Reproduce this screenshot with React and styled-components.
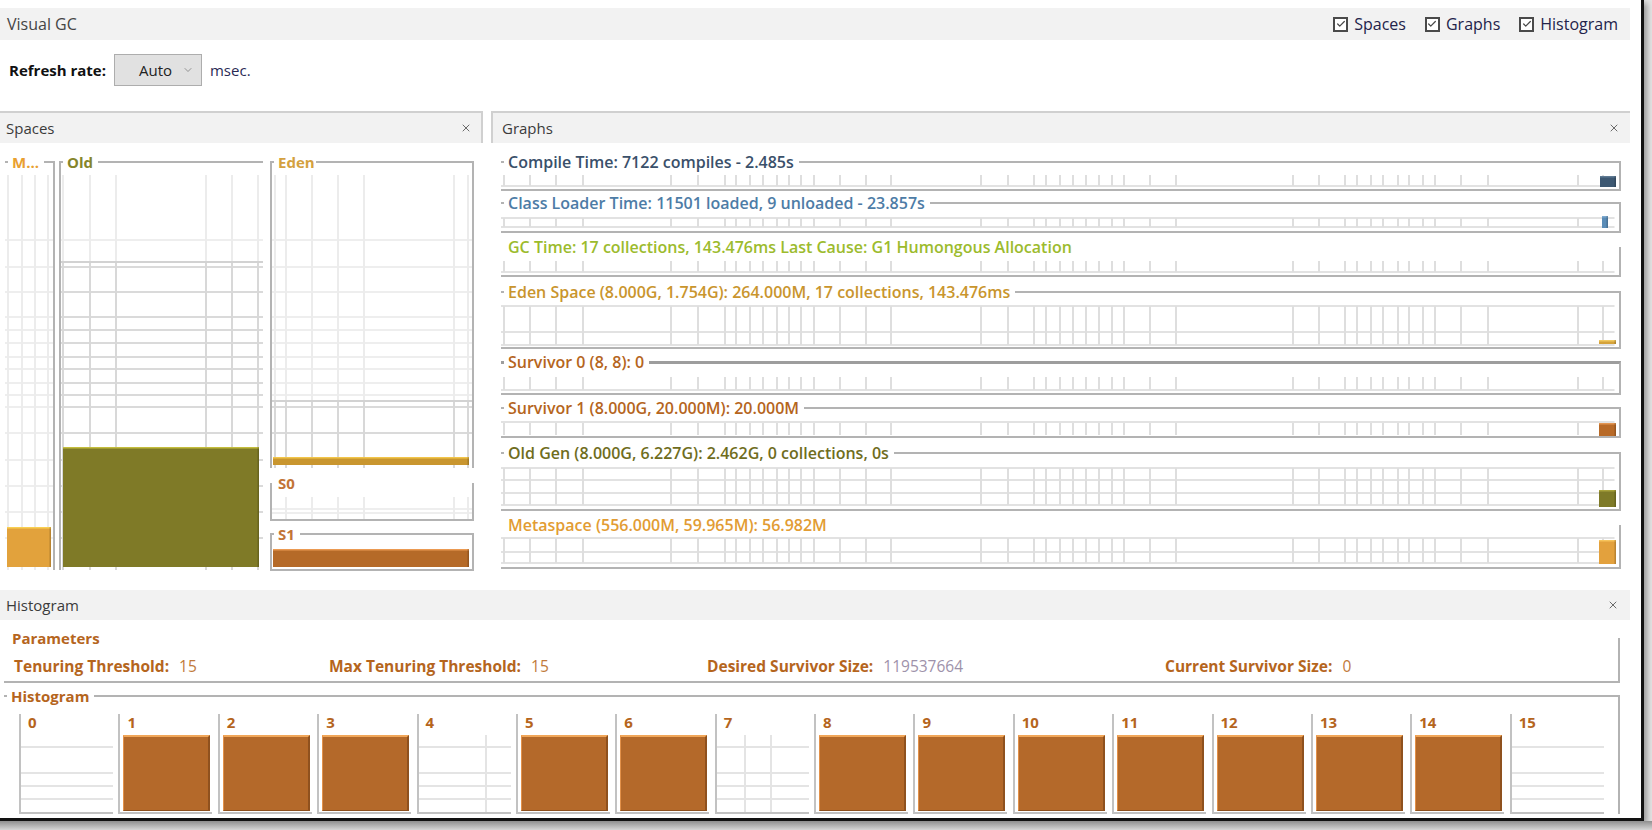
import React from "react";
import styled, { createGlobalStyle } from "styled-components";
import { Check, ChevronDown, X } from "lucide-react";

const GlobalStyle = createGlobalStyle`
  html, body { margin: 0; padding: 0; }
  body {
    width: 1652px;
    height: 830px;
    overflow: hidden;
    background: #e4e4e4;
    font-family: "Open Sans", "Noto Sans", "DejaVu Sans", sans-serif;
  }
`;

const Page = styled.div`
  width: 1652px;
  height: 830px;
  display: flex;
  flex-direction: column;
`;

const Window = styled.div`
  box-sizing: border-box;
  width: 1644px;
  height: 821px;
  padding-top: 8px;
  background: #ffffff;
  border-right: 3px solid #121212;
  border-bottom: 3px solid #121212;
  box-shadow: 3px 3px 6px rgba(0, 0, 0, 0.35);
  overflow: hidden;
`;

const BottomShade = styled.div`
  flex: 1;
  background: linear-gradient(180deg, #8f8f8f, #d6d6d6);
`;

/* ---------- top bar ---------- */

const TitleBar = styled.div`
  box-sizing: border-box;
  width: 1630px;
  height: 32px;
  padding: 0 12px 0 7px;
  display: flex;
  align-items: center;
  justify-content: space-between;
  background: #f2f2f2;
  font-size: 16px;
  color: #454545;
`;

const Toggles = styled.div`
  display: flex;
  align-items: center;
  gap: 19px;
`;

const Toggle = styled.label`
  display: flex;
  align-items: center;
  gap: 6px;
  font-size: 16px;
  color: #23234a;
`;

const CheckBox = styled.span`
  box-sizing: border-box;
  width: 15px;
  height: 15px;
  border: 2px solid #4a4a4a;
  background: #fff;
  display: flex;
  align-items: center;
  justify-content: center;
`;

const RefreshRow = styled.div`
  height: 60px;
  margin-bottom: 11px;
  padding-left: 9px;
  display: flex;
  align-items: center;
  gap: 8px;
  font-size: 15px;
`;

const FieldLabel = styled.span`
  font-weight: 700;
  color: #111;
`;

const Select = styled.div`
  box-sizing: border-box;
  width: 88px;
  height: 32px;
  padding: 0 7px 0 24px;
  display: flex;
  align-items: center;
  justify-content: space-between;
  background: #e1e1e1;
  border: 1px solid #adadad;
  color: #222;
`;

const Unit = styled.span`
  color: #2a2a55;
`;

/* ---------- panels ---------- */

const PanelsRow = styled.div`
  display: flex;
  width: 1630px;
  height: 479px;
`;

const SpacesPanel = styled.section`
  width: 483px;
  flex: none;
`;

const GraphsPanel = styled.section`
  flex: 1;
  margin-left: 8px;
`;

const PanelHeader = styled.div`
  box-sizing: border-box;
  height: ${(p) => p.$h || 32}px;
  padding: 0 ${(p) => p.$padR}px 0 ${(p) => p.$padL}px;
  display: flex;
  align-items: center;
  justify-content: space-between;
  background: #f2f2f2;
  border-top: ${(p) => (p.$framed ? "2px solid #d0d0d0" : "none")};
  border-left: ${(p) => (p.$edge === "left" ? "2px solid #d0d0d0" : "none")};
  border-right: ${(p) => (p.$edge === "right" ? "2px solid #d0d0d0" : "none")};
  font-size: 15px;
  color: #3b3b3b;
`;

const TitledBox = styled.fieldset`
  box-sizing: border-box;
  margin: ${(p) => p.$mt || 0}px 0 0 ${(p) => p.$ml || 0}px;
  padding: 0;
  min-width: 0;
  width: ${(p) => (p.$w ? `${p.$w}px` : "auto")};
  border-style: solid;
  border-color: #b3b3b3;
  border-width: ${(p) => p.$sides};
  border-top: ${(p) => (p.$thick ? "3px solid #9d9d9d" : undefined)};
`;

const BoxTitle = styled.legend`
  margin-left: ${(p) => p.$indent}px;
  padding: 0 ${(p) => (p.$tight ? 1 : 5)}px 0 4px;
  font-size: ${(p) => p.$size || 15}px;
  font-weight: ${(p) => p.$weight || 700};
  line-height: 18px;
  color: ${(p) => p.$color};
  white-space: nowrap;
`;

const ChartSvg = styled.svg`
  display: block;
  width: ${(p) => (p.$w ? `${p.$w}px` : "100%")};
  height: ${(p) => p.$h}px;
`;

const SpacesBody = styled.div`
  display: flex;
  align-items: flex-start;
  padding: 10px 0 0 5px;
`;

const EdenStack = styled.div`
  display: flex;
  flex-direction: column;
  margin-left: 7px;
`;

const GraphsBody = styled.div`
  display: flex;
  flex-direction: column;
  padding: 10px 9px 0 10px;
`;

/* ---------- histogram ---------- */

const HistogramPanel = styled.section`
  width: 1630px;
`;

const ParamGrid = styled.div`
  box-sizing: border-box;
  height: 34px;
  padding: 4px 0 0 10px;
  display: grid;
  grid-template-columns: 315px 378px 458px 1fr;
  align-items: center;
`;

const Param = styled.div`
  display: flex;
  gap: 10px;
  font-size: 15.5px;
  white-space: nowrap;
`;

const ParamName = styled.span`
  font-weight: 700;
  color: #b5651d;
`;

const ParamValue = styled.span`
  color: ${(p) => p.$color};
`;

const Cells = styled.div`
  display: grid;
  grid-template-columns: repeat(16, 1fr);
  width: 1590px;
  margin: 9px 0 0 15px;
`;

const Cell = styled.div`
  border-left: 2px solid #c2c2c2;
  display: flex;
  flex-direction: column;
`;

const CellLabel = styled.div`
  height: 16px;
  line-height: 16px;
  padding-left: 7px;
  font-size: 15px;
  font-weight: 700;
  color: #b5651d;
`;

const BarArea = styled.div`
  position: relative;
  box-sizing: border-box;
  width: 92px;
  height: 79px;
  margin-top: 5px;
  padding: 0 2px 0 3px;
  border-bottom: 2px solid #c2c2c2;
`;

const AgeBar = styled.div`
  box-sizing: border-box;
  height: 76px;
  background: #b4692a;
  border-top: 2px solid #f0a659;
  border-left: 1px solid #e39149;
  border-right: 2px solid #8f511e;
  border-bottom: 1px solid #8f511e;
`;

const CellGrid = styled.svg`
  position: absolute;
  left: 0;
  top: 0;
  width: 92px;
  height: 77px;
`;

/* ---------- data ---------- */

const GRAPH_TICKS = [
  3, 29, 55, 82, 170, 197, 224, 235, 249, 262, 276, 288, 300, 313, 339, 365,
  390, 480, 507, 533, 545, 559, 572, 585, 598, 611, 623, 649, 675, 792, 818,
  844, 856, 870, 882, 897, 908, 922, 934, 960, 987, 1077, 1102,
];

const graphRows = [
  {
    label: "Compile Time: 7122 compiles - 2.485s",
    color: "#3a506a",
    h: 18,
    gap: 0,
    hy: [15],
    v: [4, 15],
    bar: { x: 1099, y: 5, w: 16, h: 11, c: "#3d5872", e: "#5f7a93" },
  },
  {
    label: "Class Loader Time: 11501 loaded, 9 unloaded - 23.857s",
    color: "#4d7ca6",
    h: 19,
    gap: 3,
    hy: [6, 15],
    v: [6, 15],
    bar: { x: 1101, y: 4, w: 6, h: 12, c: "#5a8cb7", e: "#7eaad0" },
  },
  {
    label: "GC Time: 17 collections, 143.476ms Last Cause: G1 Humongous Allocation",
    color: "#9cbb2d",
    h: 19,
    gap: 5,
    noTop: true,
    hy: [16],
    v: [5, 16],
  },
  {
    label: "Eden Space (8.000G, 1.754G): 264.000M, 17 collections, 143.476ms",
    color: "#c9952d",
    h: 46,
    gap: 6,
    hy: [5, 31, 44],
    v: [5, 44],
    bar: { x: 1098, y: 39, w: 17, h: 4, c: "#d5a23a", e: "#f0c860" },
  },
  {
    label: "Survivor 0 (8, 8): 0",
    color: "#b5651d",
    h: 22,
    gap: 4,
    thick: true,
    hy: [19],
    v: [6, 19],
  },
  {
    label: "Survivor 1 (8.000G, 20.000M): 20.000M",
    color: "#b5651d",
    h: 19,
    gap: 4,
    hy: [5],
    v: [6, 18],
    bar: { x: 1098, y: 6, w: 17, h: 13, c: "#b86a28", e: "#e39552" },
  },
  {
    label: "Old Gen (8.000G, 6.227G): 2.462G, 0 collections, 0s",
    color: "#6f6d1d",
    h: 47,
    gap: 6,
    hy: [6, 18, 31, 43],
    v: [6, 43],
    bar: { x: 1098, y: 28, w: 17, h: 17, c: "#7e7a28", e: "#a8a23c" },
  },
  {
    label: "Metaspace (556.000M, 59.965M): 56.982M",
    color: "#e29c33",
    h: 33,
    gap: 5,
    noTop: true,
    hy: [4, 18, 29],
    v: [4, 29],
    bar: { x: 1098, y: 6, w: 17, h: 24, c: "#e3a13d", e: "#f7c45c" },
  },
];

const SPACE_LINES = [69, 96, 121, 146, 159, 172, 186, 198, 212, 224, 236, 262, 289, 315, 341, 367];

const params = [
  { name: "Tenuring Threshold:", value: "15", color: "#c17a3b" },
  { name: "Max Tenuring Threshold:", value: "15", color: "#c17a3b" },
  { name: "Desired Survivor Size:", value: "119537664", color: "#9e92aa" },
  { name: "Current Survivor Size:", value: "0", color: "#c17a3b" },
];

const ages = Array.from({ length: 16 }, (_, i) => ({
  age: i,
  empty: [0, 4, 7, 15].includes(i),
  cols: i === 4 ? [67] : i === 7 ? [28, 54] : [],
}));

/* ---------- drawings ---------- */

function Bar({ x, y, w, h, c, e }) {
  return (
    <g>
      <rect x={x} y={y} width={w} height={h} fill={c} />
      <rect x={x} y={y} width={w} height="1.5" fill={e} />
      <rect x={x + w - 1.5} y={y} width="1.5" height={h} fill="rgba(0,0,0,0.18)" />
    </g>
  );
}

function GraphChart({ row }) {
  return (
    <ChartSvg $h={row.h}>
      {row.hy.map((y) => (
        <line key={`h${y}`} x1="0" x2="99.6%" y1={y} y2={y} stroke="#e2e2e2" strokeWidth="2" />
      ))}
      {GRAPH_TICKS.map((x) => (
        <line key={`v${x}`} x1={x} x2={x} y1={row.v[0]} y2={row.v[1]} stroke="#dedede" strokeWidth="2" />
      ))}
      {row.bar && <Bar {...row.bar} />}
    </ChartSvg>
  );
}

function SpaceChart({ w, h, vx, top = 4, lines = [], darkFrom, bar }) {
  return (
    <ChartSvg $w={w} $h={h}>
      {lines.map((y) => (
        <line
          key={`h${y}`}
          x1="0"
          x2={w}
          y1={y}
          y2={y}
          stroke={darkFrom != null && y >= darkFrom ? "#dadada" : "#eeeeee"}
          strokeWidth="2"
        />
      ))}
      {vx.map((x) => (
        <line key={`v${x}`} x1={x} x2={x} y1={top} y2={h} stroke="#ececec" strokeWidth="2" />
      ))}
      {darkFrom != null &&
        vx.map((x) => (
          <line key={`d${x}`} x1={x} x2={x} y1={darkFrom} y2={h} stroke="#d8d8d8" strokeWidth="2" />
        ))}
      {darkFrom != null && (
        <line x1="0" x2={w} y1={darkFrom} y2={darkFrom} stroke="#d2d2d2" strokeWidth="2" />
      )}
      {bar && <Bar {...bar} />}
    </ChartSvg>
  );
}

function Close() {
  return <X size={12} strokeWidth={2} color="#6a6a6a" />;
}

export default function App() {
  return (
    <Page>
      <GlobalStyle />
      <Window>
        <TitleBar>
          <span>Visual GC</span>
          <Toggles>
            {["Spaces", "Graphs", "Histogram"].map((name) => (
              <Toggle key={name}>
                <CheckBox>
                  <Check size={10} strokeWidth={3} color="#4a4a4a" />
                </CheckBox>
                {name}
              </Toggle>
            ))}
          </Toggles>
        </TitleBar>

        <RefreshRow>
          <FieldLabel>Refresh rate:</FieldLabel>
          <Select>
            Auto
            <ChevronDown size={12} strokeWidth={1.5} color="#777" />
          </Select>
          <Unit>msec.</Unit>
        </RefreshRow>

        <PanelsRow>
          <SpacesPanel>
            <PanelHeader $framed $edge="right" $padL={6} $padR={9}>
              <span>Spaces</span>
              <Close />
            </PanelHeader>
            <SpacesBody>
              <TitledBox $w={50} $sides="2px 2px 0 0">
                <BoxTitle $indent={3} $color="#e9a030">M...</BoxTitle>
                <SpaceChart
                  w={48}
                  h={399}
                  vx={[3, 17, 30, 43]}
                  lines={SPACE_LINES}
                  bar={{ x: 2, y: 356, w: 44, h: 40, c: "#e2a23c", e: "#f9cf52" }}
                />
              </TitledBox>
              <TitledBox $w={204} $ml={4} $sides="2px 0 0 2px">
                <BoxTitle $indent={2} $color="#85852b">Old</BoxTitle>
                <SpaceChart
                  w={202}
                  h={399}
                  vx={[2, 29, 55, 145, 171, 197]}
                  lines={SPACE_LINES}
                  darkFrom={91}
                  bar={{ x: 2, y: 276, w: 196, h: 120, c: "#7f7a27", e: "#c4bd3e" }}
                />
              </TitledBox>
              <EdenStack>
                <TitledBox $w={204} $sides="2px 2px 0 2px">
                  <BoxTitle $indent={2} $tight $color="#d4a13f">Eden</BoxTitle>
                  <SpaceChart
                    w={200}
                    h={297}
                    vx={[3, 14, 40, 66, 92, 182, 196]}
                    lines={SPACE_LINES.filter((y) => y < 280)}
                    darkFrom={230}
                    bar={{ x: 1, y: 286, w: 196, h: 8, c: "#c9962f", e: "#f2c54a" }}
                  />
                </TitledBox>
                <TitledBox $w={204} $mt={6} $sides="0 2px 2px 2px">
                  <BoxTitle $indent={2} $color="#c27437">S0</BoxTitle>
                  <SpaceChart w={200} h={27} top={5} vx={[14, 40, 66, 92, 182, 196]} lines={[17, 21]} />
                </TitledBox>
                <TitledBox $w={204} $mt={4} $sides="2px">
                  <BoxTitle $indent={2} $color="#c27437">S1</BoxTitle>
                  <SpaceChart
                    w={200}
                    h={26}
                    vx={[]}
                    bar={{ x: 1, y: 6, w: 196, h: 18, c: "#b56a28", e: "#eb9a52" }}
                  />
                </TitledBox>
              </EdenStack>
            </SpacesBody>
          </SpacesPanel>

          <GraphsPanel>
            <PanelHeader $framed $edge="left" $padL={9} $padR={10}>
              <span>Graphs</span>
              <Close />
            </PanelHeader>
            <GraphsBody>
              {graphRows.map((row) => (
                <TitledBox
                  key={row.label}
                  $mt={row.gap}
                  $thick={row.thick}
                  $sides={row.noTop ? "0 2px 2px 0" : "2px 2px 2px 0"}
                >
                  <BoxTitle $indent={3} $size={16} $weight={600} $color={row.color}>
                    {row.label}
                  </BoxTitle>
                  <GraphChart row={row} />
                </TitledBox>
              ))}
            </GraphsBody>
          </GraphsPanel>
        </PanelsRow>

        <HistogramPanel>
          <PanelHeader $h={30} $padL={6} $padR={11}>
            <span>Histogram</span>
            <Close />
          </PanelHeader>
          <TitledBox $w={1616} $ml={4} $mt={9} $sides="0 2px 2px 0">
            <BoxTitle $indent={4} $color="#b5651d">Parameters</BoxTitle>
            <ParamGrid>
              {params.map((p) => (
                <Param key={p.name}>
                  <ParamName>{p.name}</ParamName>
                  <ParamValue $color={p.color}>{p.value}</ParamValue>
                </Param>
              ))}
            </ParamGrid>
          </TitledBox>
          <TitledBox $w={1616} $ml={4} $mt={4} $sides="2px 2px 0 0">
            <BoxTitle $indent={3} $color="#b5651d">Histogram</BoxTitle>
            <Cells>
              {ages.map((a) => (
                <Cell key={a.age}>
                  <CellLabel>{a.age}</CellLabel>
                  <BarArea>
                    {a.empty ? (
                      <CellGrid>
                        {[12, 38, 51, 64].map((y) => (
                          <line key={y} x1="0" x2="92" y1={y} y2={y} stroke="#e4e4e4" strokeWidth="2" />
                        ))}
                        {a.cols.map((x) => (
                          <line key={x} x1={x} x2={x} y1="0" y2="77" stroke="#e4e4e4" strokeWidth="2" />
                        ))}
                      </CellGrid>
                    ) : (
                      <AgeBar />
                    )}
                  </BarArea>
                </Cell>
              ))}
            </Cells>
          </TitledBox>
        </HistogramPanel>
      </Window>
      <BottomShade />
    </Page>
  );
}
